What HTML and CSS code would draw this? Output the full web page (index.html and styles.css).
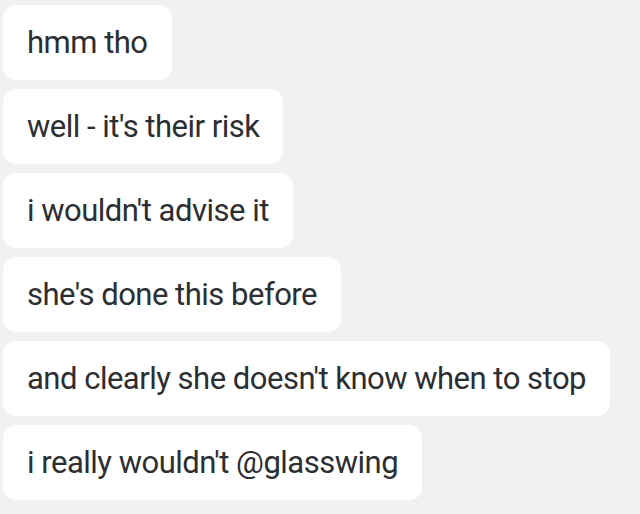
FILE: index.html
```html
<!DOCTYPE html>
<html lang="en">
<head>
    <meta charset="UTF-8">
    <title>Messages</title>
    <link rel="stylesheet" href="styles.css">
</head>
<body>

<div class="chat">
    <div class="msg">hmm tho</div>
    <div class="msg">well - it's their risk</div>
    <div class="msg">i wouldn't advise it</div>
    <div class="msg">she's done this before</div>
    <div class="msg">and clearly she doesn't know when to stop</div>
    <div class="msg">i really wouldn't @glasswing</div>
</div>

</body>
</html>
```

FILE: styles.css
```css
body {
    margin: 0;
    background-color: #f1f1f1;
    font-family: Roboto, "Liberation Sans", sans-serif;
}
.chat {
    display: flex;
    flex-direction: column;
    align-items: flex-start;
    gap: 9px;
    padding: 5px 3px;
}
.msg {
    background-color: white;
    color: #2b2e32;
    font-size: 31px;
    letter-spacing: -0.5px;
    line-height: 35px;
    padding: 20px 24px;
    border-radius: 13px;
}
```
